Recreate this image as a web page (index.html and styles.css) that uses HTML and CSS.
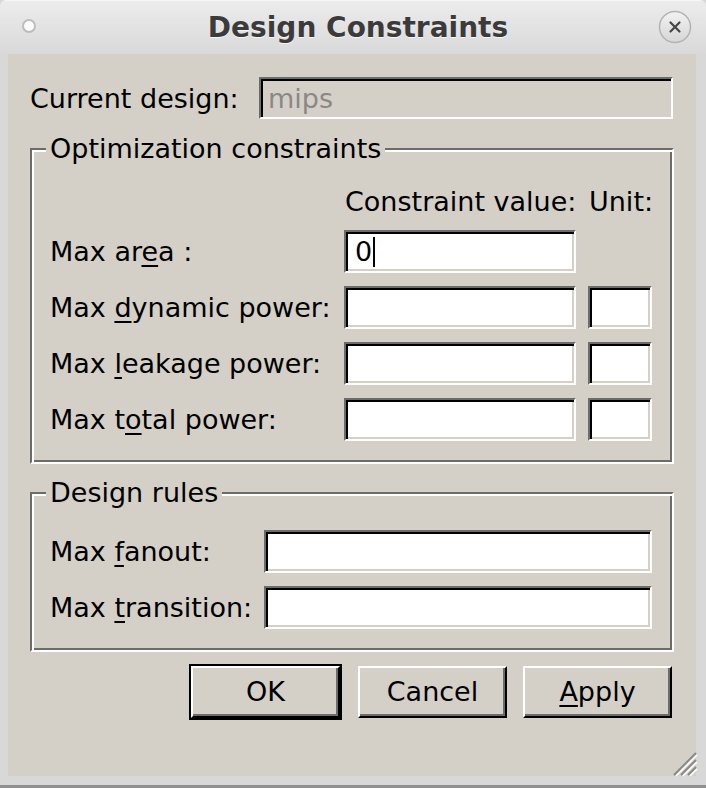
FILE: index.html
```html
<!DOCTYPE html>
<html>
<head>
<meta charset="utf-8">
<title>Design Constraints</title>
<link rel="stylesheet" href="styles.css">
</head>
<body>
<div class="window">
  <div class="titlebar">
    <span class="dot"></span>
    <span class="title">Design Constraints</span>
    <span class="close">
      <svg width="34" height="34" viewBox="0 0 34 34">
        <defs>
          <linearGradient id="cg" x1="0" y1="0" x2="0" y2="1">
            <stop offset="0" stop-color="#f2f2f2"/>
            <stop offset="1" stop-color="#d6d6d6"/>
          </linearGradient>
        </defs>
        <circle cx="17" cy="17" r="15.5" fill="url(#cg)" stroke="#b3b3b3" stroke-width="1.5"/>
        <path d="M12.5 12.5 L21.5 21.5 M21.5 12.5 L12.5 21.5" stroke="#474747" stroke-width="2.2" stroke-linecap="round"/>
      </svg>
    </span>
  </div>
  <div class="frame">
    <div class="main">
      <div class="current-row">
        <span class="lbl cur-lbl">Current design:</span>
        <div class="entry disabled">mips</div>
      </div>

      <fieldset class="group g1">
        <legend>Optimization constraints</legend>
        <div class="opt-grid">
          <span></span>
          <span class="hdr">Constraint value:</span>
          <span class="hdr">Unit:</span>

          <span class="lbl">Max ar<u>e</u>a :</span>
          <div class="entry"><span>0</span><span class="caret"></span></div>
          <span></span>

          <span class="lbl">Max <u>d</u>ynamic power:</span>
          <div class="entry"></div>
          <div class="entry"></div>

          <span class="lbl">Max <u>l</u>eakage power:</span>
          <div class="entry"></div>
          <div class="entry"></div>

          <span class="lbl">Max t<u>o</u>tal power:</span>
          <div class="entry"></div>
          <div class="entry"></div>
        </div>
      </fieldset>

      <fieldset class="group g2">
        <legend>Design rules</legend>
        <div class="rules-grid">
          <span class="lbl">Max <u>f</u>anout:</span>
          <div class="entry"></div>
          <span class="lbl">Max <u>t</u>ransition:</span>
          <div class="entry"></div>
        </div>
      </fieldset>

      <div class="buttons">
        <div class="default-ring"><div class="btn">OK</div></div>
        <div class="btn">Cancel</div>
        <div class="btn"><span><u>A</u>pply</span></div>
      </div>
    </div>
  </div>
  <svg class="grip" width="28" height="28" viewBox="0 0 28 28">
    <path d="M26 4 L4 26 M26 11 L11 26 M26 18 L18 26" stroke="#8a8a8a" stroke-width="2"/>
    <path d="M27 6 L6 27 M27 13 L13 27 M27 20 L20 27" stroke="#ffffff" stroke-width="1.5"/>
  </svg>
</div>
</body>
</html>
```
FILE: styles.css
```css
html, body {
  margin: 0;
  padding: 0;
  background: #d7d7d7;
}

body {
  font-family: "DejaVu Sans", "Noto Sans", sans-serif;
  color: #000;
}

.window {
  position: relative;
  width: 706px;
  height: 788px;
  display: flex;
  flex-direction: column;
  background: #d8d8d8;
  overflow: hidden;
  border-radius: 6px 6px 0 0;
  box-sizing: border-box;
}

/* Title bar */
.titlebar {
  flex: none;
  height: 54px;
  display: flex;
  align-items: center;
  background: linear-gradient(#ececec, #d9d9d9);
  border-top: 1px solid #f6f6f6;
  box-sizing: border-box;
}

.dot {
  flex: none;
  width: 10px;
  height: 10px;
  margin-left: 22px;
  margin-top: -3px;
  border-radius: 50%;
  background: #fbfbfb;
  border: 2px solid #bdbdbd;
}

.title {
  flex: 1;
  text-align: center;
  padding-left: 22px;
  font-family: "DejaVu Sans", sans-serif;
  font-weight: bold;
  font-size: 28px;
  color: #3b3b3b;
  text-shadow: 0 1px 0 rgba(255, 255, 255, 0.7);
  margin-top: -1px;
}

.close {
  flex: none;
  width: 34px;
  height: 34px;
  margin-right: 14px;
  margin-top: -2px;
  display: flex;
}

/* Frame + client area */
.frame {
  flex: 1;
  display: flex;
  padding: 0 10px 9px 8px;
  border-bottom: 3px solid #8f8f8f;
  background: #d8d8d8;
}

.main {
  flex: 1;
  background: #d4d0c8;
  padding: 23px 22px 0;
  display: flex;
  flex-direction: column;
  font-size: 27px;
}

.lbl {
  white-space: nowrap;
  font-size: 27px;
}

u {
  text-decoration: underline;
  text-decoration-thickness: 2px;
  text-underline-offset: 4px;
}

/* Current design row */
.current-row {
  display: flex;
  align-items: center;
  height: 42px;
  margin-right: 1px;
}

.cur-lbl {
  flex: none;
  width: 229px;
}

/* Sunken entry */
.entry {
  box-sizing: border-box;
  height: 43px;
  border: 2px solid;
  border-color: #6e6c68 #ffffff #ffffff #6e6c68;
  box-shadow: inset 2px 2px 0 #000, inset -2px -2px 0 #d4d0c8;
  background: #ffffff;
  padding: 0 8px 0 9px;
  display: flex;
  align-items: center;
  font-size: 27px;
}

.current-row .entry {
  flex: 1;
  height: 42px;
}

.entry.disabled {
  background: #d4d0c8;
  color: #8b8884;
  padding-left: 7px;
}

.caret {
  display: inline-block;
  width: 2px;
  height: 30px;
  background: #000;
  margin-left: 1px;
}

/* Group boxes */
.group {
  margin: 0;
  min-width: 0;
  border: 2px solid;
  border-color: #6e6c68 #ffffff #ffffff #6e6c68;
  box-shadow: inset 2px 2px 0 #ffffff, inset -2px -2px 0 #6e6c68;
  padding: 22px 20px 21px 18px;
}

.group legend {
  font-size: 27px;
  line-height: 30px;
  padding: 0 4px;
  margin-left: -4px;
  background: #d4d0c8;
}

.g1 {
  margin-top: 15px;
}

.g2 {
  margin-top: 14px;
}

.opt-grid {
  display: grid;
  grid-template-columns: 1fr 232px 64px;
  grid-template-rows: 31px 43px 43px 43px 43px;
  column-gap: 12px;
  row-gap: 13px;
  align-items: center;
}

.hdr {
  white-space: nowrap;
  font-size: 27px;
  margin-left: 1px;
}

.rules-grid {
  display: grid;
  grid-template-columns: 202px 1fr;
  grid-template-rows: 43px 43px;
  column-gap: 12px;
  row-gap: 13px;
  align-items: center;
}

/* Buttons */
.buttons {
  margin-top: 12px;
  height: 56px;
  display: flex;
  align-items: center;
  justify-content: flex-end;
  gap: 16px;
  margin-right: 2px;
}

.btn {
  box-sizing: border-box;
  width: 149px;
  height: 52px;
  background: #d4d0c8;
  border: 2px solid;
  border-color: #ffffff #000000 #000000 #ffffff;
  box-shadow: inset -2px -2px 0 #6e6c68;
  display: flex;
  align-items: center;
  justify-content: center;
  font-size: 27px;
  padding-bottom: 2px;
}

.default-ring {
  border: 2px solid #000;
  display: flex;
}

/* Resize grip (overlays the corner) */
.grip {
  position: absolute;
  right: 8px;
  bottom: 11px;
}
```
